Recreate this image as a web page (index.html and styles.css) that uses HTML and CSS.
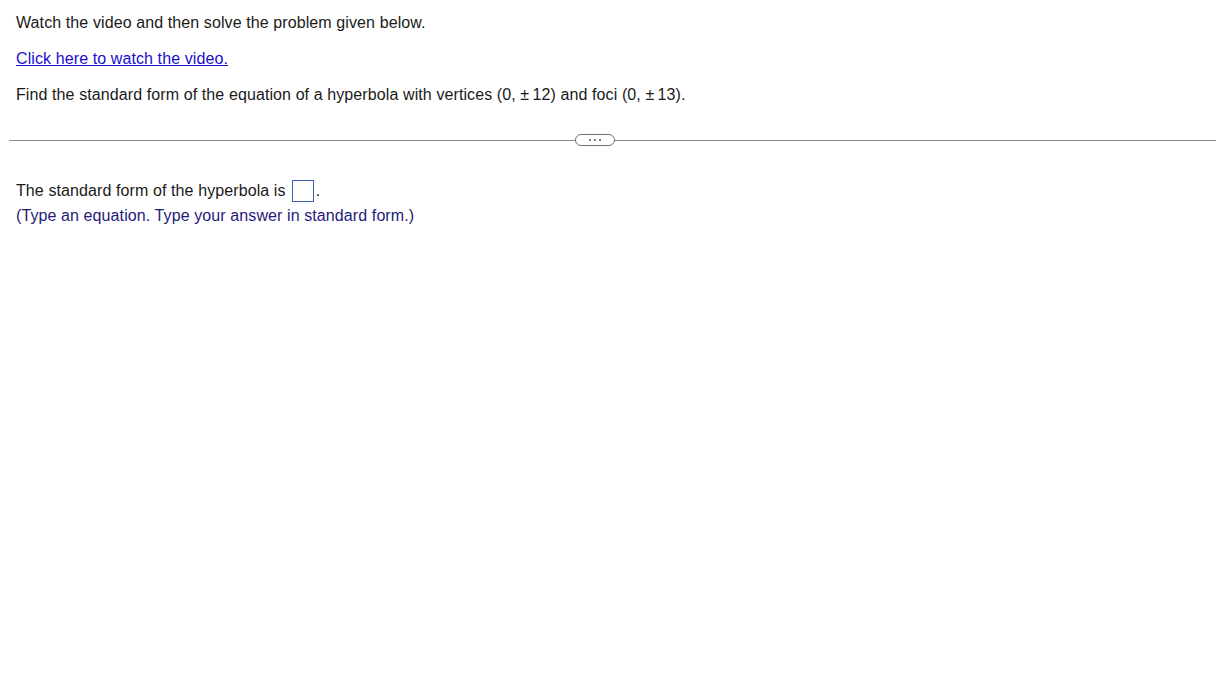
FILE: index.html
```html
<!DOCTYPE html>
<html>
<head>
<meta charset="utf-8">
<link rel="stylesheet" href="styles.css">
</head>
<body>
<div class="page">
  <div class="question">
    <p class="line">Watch the video and then solve the problem given below.</p>
    <p class="line"><a class="link" href="#">Click here to watch the video.</a></p>
    <p class="line">Find the standard form of the equation of a hyperbola with vertices (0, ±&thinsp;12) and foci (0, ±&thinsp;13).</p>
  </div>
  <div class="divider">
    <span class="rule rule-left"></span>
    <span class="more">
      <svg width="40" height="12" viewBox="0 0 40 12"><rect x="0.5" y="0.5" width="39" height="11" rx="5.5" fill="#fff" stroke="#6e6e6e"/><circle cx="15" cy="6" r="1" fill="#555"/><circle cx="20" cy="6" r="1" fill="#555"/><circle cx="25" cy="6" r="1" fill="#555"/></svg>
    </span>
    <span class="rule rule-right"></span>
  </div>
  <div class="answer">
    <p class="ans-line">The standard form of the hyperbola is<span class="box"></span>.</p>
    <p class="hint">(Type an equation. Type your answer in standard form.)</p>
  </div>
</div>
</body>
</html>
```
FILE: styles.css
```css
html, body {
  margin: 0;
  padding: 0;
  background: #fff;
}
body {
  font-family: Arial, "Liberation Sans", sans-serif;
  font-size: 16px;
  letter-spacing: 0.1px;
  color: #1a1a1a;
}
.page {
  padding: 0 13px 0 9px;
}
.question {
  padding: 14px 0 0 7px;
}
.line {
  margin: 0 0 18px 0;
  line-height: 18px;
}
.link {
  color: #1a0dcc;
  text-decoration: underline;
}
.divider {
  display: flex;
  align-items: center;
  margin-top: 30px;
  height: 12px;
}
.rule {
  height: 1px;
  background: #8a8a8a;
}
.rule-left {
  flex: 566 1 0;
}
.rule-right {
  flex: 601 1 0;
}
.more {
  display: flex;
}
.more svg {
  display: block;
}
.answer {
  padding: 32px 0 0 7px;
}
.ans-line {
  margin: 0;
  line-height: 25px;
  display: flex;
  align-items: center;
  white-space: pre;
}
.box {
  display: inline-block;
  width: 20px;
  height: 20px;
  border: 1px solid #3a5fb8;
  margin-left: 6px;
  margin-right: 2px;
}
.hint {
  margin: 0;
  line-height: 25px;
  color: #1f1a7a;
}
```
